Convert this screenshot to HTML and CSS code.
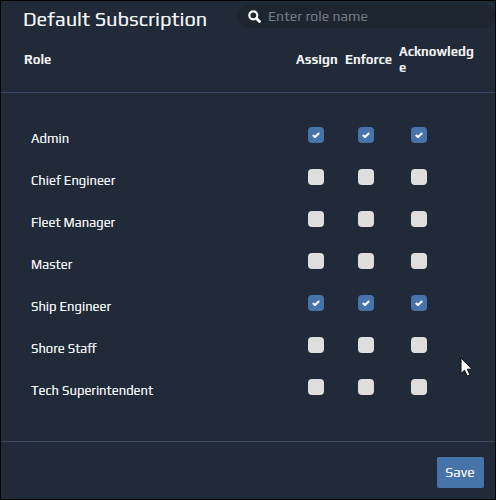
FILE: index.html
```html
<!DOCTYPE html>
<html lang="en">
<head>
<meta charset="utf-8">
<title>Default Subscription</title>
<link rel="stylesheet" href="styles.css">
</head>
<body>
<svg class="defs" aria-hidden="true"><symbol id="check" viewBox="0 0 8 6"><path d="M.8 3l2.2 2L7.2 1" fill="none" stroke="#fff" stroke-width="2.1"/></symbol></svg>
<main class="panel">
  <header class="top">
    <h1>Default Subscription</h1>
    <label class="search">
      <svg width="13" height="13" viewBox="0 0 13 13"><circle cx="5.3" cy="5.3" r="4" fill="none" stroke="#fff" stroke-width="2.2"/><path d="M8.5 8.5l3 3" stroke="#fff" stroke-width="2.8" stroke-linecap="round"/></svg>
      <input type="text" placeholder="Enter role name">
    </label>
  </header>
  <div class="grid head"><span>Role</span><span>Assign</span><span>Enforce</span><span>Acknowledge</span></div>
  <section class="rows">
    <div class="grid row"><span>Admin</span><i class="box on"><svg><use href="#check"/></svg></i><i class="box on"><svg><use href="#check"/></svg></i><i class="box on"><svg><use href="#check"/></svg></i></div>
    <div class="grid row"><span>Chief Engineer</span><i class="box"></i><i class="box"></i><i class="box"></i></div>
    <div class="grid row"><span>Fleet Manager</span><i class="box"></i><i class="box"></i><i class="box"></i></div>
    <div class="grid row"><span>Master</span><i class="box"></i><i class="box"></i><i class="box"></i></div>
    <div class="grid row"><span>Ship Engineer</span><i class="box on"><svg><use href="#check"/></svg></i><i class="box on"><svg><use href="#check"/></svg></i><i class="box on"><svg><use href="#check"/></svg></i></div>
    <div class="grid row"><span>Shore Staff</span><i class="box"></i><i class="box"></i><i class="box"></i></div>
    <div class="grid row"><span>Tech Superintendent</span><i class="box"></i><i class="box"></i><i class="box"></i></div>
  </section>
  <footer><button type="button">Save</button></footer>
  <svg class="cursor" width="13" height="20" viewBox="0 0 13 20"><path d="M1 1v15.5l3.5-3.3 2.7 5.9 2.8-1.2-2.6-5.7H12z" fill="#fff" stroke="#080b10"/></svg>
</main>
</body>
</html>
```
FILE: styles.css
```css
* { box-sizing: border-box; }
body { margin: 0; font-family: Play, Roboto, "Liberation Sans", sans-serif; font-size: 13px; color: #f2f3f5; }
.defs { position: absolute; width: 0; height: 0; }
.panel { position: relative; width: 496px; height: 500px; border: 1px solid #000; background: #212a38; overflow: hidden; display: flex; flex-direction: column; }
.top { display: flex; justify-content: space-between; height: 36px; padding-left: 22px; }
h1 { margin: 0; padding-top: 6px; font-size: 20px; line-height: 24px; font-weight: 400; white-space: nowrap; text-shadow: 0 0 0.5px rgba(242, 243, 245, 0.5); }
.search { display: flex; align-items: center; gap: 6px; width: 258px; height: 24px; margin-top: 3px; padding-left: 11px; border-radius: 12px; background: #1d2531; }
.search svg { flex: none; }
.search input { width: 200px; padding: 0 0 0 1px; border: 0; outline: 0; background: none; font: inherit; font-size: 14px; color: #fff; }
.search input::placeholder { color: #727b87; opacity: 1; }
.grid { display: grid; align-items: center; }
.head { grid-template-columns: 272px 49px 54px 76px; height: 56px; padding: 0 0 9px 23px; border-bottom: 1px solid #364866; font-weight: 700; line-height: 16px; }
.head span { overflow-wrap: anywhere; }
.rows { height: 348px; padding-top: 21px; text-shadow: 0 0 0.5px rgba(242, 243, 245, 0.6); }
.row { grid-template-columns: 277px 50px 53px 16px; height: 42px; padding-left: 30px; }
.row span { padding-top: 8px; line-height: 16px; }
.box { display: grid; place-items: center; width: 16px; height: 16px; border-radius: 4px; background: #dedede; }
.on { background: #4573aa; }
.box svg { width: 8px; height: 6px; }
footer { display: flex; justify-content: flex-end; height: 58px; padding: 15px 11px 0 0; border-top: 1px solid #3c4c63; }
button { width: 47px; height: 31px; padding: 0 1px 2px 0; border: 0; border-radius: 2px; background: #4573aa; color: #f2f3f5; font: inherit; font-size: 14px; text-shadow: 0 0 0.5px rgba(242, 243, 245, 0.5); }
.cursor { position: absolute; left: 459px; top: 356px; }
```
